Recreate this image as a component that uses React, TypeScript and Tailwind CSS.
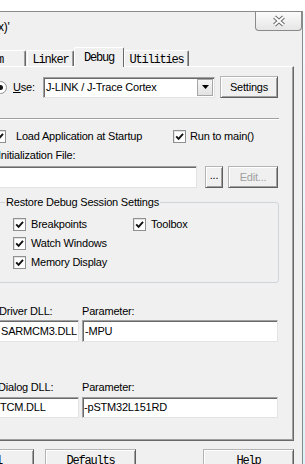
import React from 'react';

const sunken =
  'bg-white border border-t-[#a0a0a0] border-l-[#a0a0a0] border-r-[#e3e3e3] border-b-[#e3e3e3] shadow-[inset_1px_1px_0_#696969]';
const raised =
  'border border-t-[#b4b4b4] border-l-[#b4b4b4] border-r-[#5f5f5f] border-b-[#5f5f5f] shadow-[inset_1px_1px_0_#ffffff,inset_-1px_-1px_0_#a0a0a0] bg-[#f0f0f0]';

const CheckBox: React.FC<{ className?: string }> = ({ className = '' }) => (
  <span
    className={`w-[13px] h-[13px] shrink-0 flex items-center justify-center border border-[#8e8f8f] bg-white shadow-[inset_1px_1px_0_#e2e2e2] ${className}`}
  >
    <svg width="9" height="9" viewBox="0 0 9 9">
      <path d="M1.2 4.3 L3.6 6.8 L8 1.8" fill="none" stroke="#111" strokeWidth="1.9" />
    </svg>
  </span>
);

const Radio: React.FC<{ className?: string }> = ({ className = '' }) => (
  <span
    className={`w-[13px] h-[13px] shrink-0 rounded-full flex items-center justify-center border border-[#8e8f8f] bg-white ${className}`}
  >
    <span className="w-[5px] h-[5px] rounded-full bg-[#151515]" />
  </span>
);

const Field: React.FC<{ className?: string; children?: React.ReactNode }> = ({ className = '', children }) => (
  <div className={`flex items-center whitespace-nowrap overflow-hidden ${sunken} ${className}`}>{children}</div>
);

const Btn: React.FC<{ className?: string; children?: React.ReactNode }> = ({ className = '', children }) => (
  <div className={`flex items-center justify-center whitespace-nowrap ${raised} ${className}`}>{children}</div>
);

const Tab: React.FC<{ className?: string; children?: React.ReactNode }> = ({ className = '', children }) => (
  <div
    className={`flex items-center justify-center whitespace-nowrap bg-[#f0f0f0] border-t border-l border-t-[#ffffff] border-l-[#ffffff] border-r border-r-[#696969] shadow-[inset_-1px_0_0_#a0a0a0] rounded-t-[2px] ${className}`}
  >
    {children}
  </div>
);

export default function App() {
  return (
    <div className="w-[305px] h-[464px] overflow-hidden bg-white flex flex-col font-['Liberation_Sans',Arial,sans-serif] text-[11px] leading-[13px] tracking-[-0.2px] text-black">
      <div className="h-[11px] shrink-0" />
      <div className="flex flex-1 min-h-0">
        {/* Dialog window */}
        <div className="w-[303px] shrink-0 flex flex-col bg-[#f0f0f0] border-t border-r border-[#8a8a8a]">
          {/* Title bar */}
          <div className="h-[35px] shrink-0 flex items-start">
            <span className="-ml-[2px] mt-[8px] text-[12px] leading-[14px]">x)'</span>
            <div className="ml-auto w-[47px] h-[19px] flex items-center justify-center border-x border-b border-[#8a8a8a] rounded-b-[4px] bg-linear-to-b from-[#fbfbfb] to-[#e6e6e6]">
              <svg width="14" height="12" viewBox="0 0 14 12">
                <path d="M2.5 2 L11.5 10 M11.5 2 L2.5 10" stroke="#6a6a6a" strokeWidth="4" />
                <path d="M2.5 2 L11.5 10 M11.5 2 L2.5 10" stroke="#ffffff" strokeWidth="2" />
              </svg>
            </div>
          </div>

          {/* Tabs */}
          <div className="h-[19px] shrink-0 flex items-end font-['Liberation_Mono',monospace] text-[12px] leading-[14px] tracking-[-1.2px]">
            <Tab className="-ml-[38px] w-[64px] h-[16px] pt-[2px]">Asm</Tab>
            <Tab className="ml-[1px] w-[47px] h-[16px] pt-[2px]">Linker</Tab>
            <Tab className="w-[50px] h-[20px] -mb-px relative z-10 shadow-none">Debug</Tab>
            <Tab className="w-[65px] h-[16px] pt-[2px]">Utilities</Tab>
          </div>

          {/* Tab panel */}
          <div className="w-[294px] h-[375px] shrink-0 flex flex-col border-t border-t-white border-r border-b border-r-[#696969] border-b-[#696969] shadow-[inset_-1px_-1px_0_#a0a0a0]">
            {/* Use row */}
            <div className="mt-[9px] h-[22px] flex items-center">
              <Radio className="-ml-[6px]" />
              <span className="ml-[6px] w-[30px]">
                <span className="underline">U</span>se:
              </span>
              <div className={`w-[172px] h-[21px] flex items-center ${sunken}`}>
                <span className="flex-1 pl-[2px] whitespace-nowrap">J-LINK / J-Trace Cortex</span>
                <div className="w-[16px] h-[17px] mr-[1px] flex items-center justify-center border border-[#a7a7a7] bg-linear-to-b from-[#f6f6f6] to-[#e2e2e2]">
                  <svg width="7" height="4" viewBox="0 0 7 4">
                    <path d="M0 0 H7 L3.5 4 Z" fill="#000" />
                  </svg>
                </div>
              </div>
              <Btn className="ml-[5px] w-[58px] h-[22px]">Settings</Btn>
            </div>

            <div className="mt-[20px] w-[279px] h-[2px] border-t border-t-[#a0a0a0] border-b border-b-white" />

            {/* Load / Run row */}
            <div className="mt-[10px] h-[13px] flex items-center">
              <div className="w-[173px] flex items-center">
                <CheckBox className="-ml-[7px]" />
                <span className="ml-[10px] whitespace-nowrap">Load Application at Startup</span>
              </div>
              <CheckBox />
              <span className="ml-[4px]">Run to main()</span>
            </div>

            <div className="mt-[6px] -ml-[2px]">Initialization File:</div>

            <div className="mt-[4px] h-[22px] flex">
              <Field className="-ml-[4px] w-[201px] h-[22px]" />
              <Btn className="ml-[8px] w-[18px] h-[22px] pb-[3px]">...</Btn>
              <Btn className="ml-[5px] w-[50px] h-[22px] text-[#a0a0a0]">Edit...</Btn>
            </div>

            {/* Restore group */}
            <fieldset className="mt-[8px] -ml-[4px] w-[283px] border border-[#cfd6da] rounded-[3px] pl-[16px] pt-[9px] pb-[13px]">
              <legend className="-ml-[8px] px-[1px] leading-[13px]">Restore Debug Session Settings</legend>
              <div className="flex flex-col gap-[6px]">
                <div className="h-[13px] flex items-center">
                  <div className="w-[120px] flex items-center">
                    <CheckBox />
                    <span className="ml-[5px]">Breakpoints</span>
                  </div>
                  <CheckBox />
                  <span className="ml-[5px]">Toolbox</span>
                </div>
                <div className="h-[13px] flex items-center">
                  <CheckBox />
                  <span className="ml-[5px]">Watch Windows</span>
                </div>
                <div className="h-[13px] flex items-center">
                  <CheckBox />
                  <span className="ml-[5px]">Memory Display</span>
                </div>
              </div>
            </fieldset>

            {/* Driver DLL */}
            <div className="mt-[22px] flex">
              <span className="-ml-[1px] w-[83px] whitespace-nowrap">Driver DLL:</span>
              <span>Parameter:</span>
            </div>
            <div className="mt-[2px] h-[22px] flex">
              <Field className="-ml-[4px] w-[83px] h-[22px] pl-[4px]">SARMCM3.DLL</Field>
              <Field className="ml-[3px] w-[196px] h-[22px] pl-[2px]">-MPU</Field>
            </div>

            {/* Dialog DLL */}
            <div className="mt-[39px] flex">
              <span className="-ml-[2px] w-[84px] whitespace-nowrap">Dialog DLL:</span>
              <span>Parameter:</span>
            </div>
            <div className="mt-[3px] h-[21px] flex">
              <Field className="-ml-[4px] w-[83px] h-[21px] pl-[3px]">TCM.DLL</Field>
              <Field className="ml-[3px] w-[196px] h-[21px] pl-[1px]">-pSTM32L151RD</Field>
            </div>
          </div>

          {/* Bottom buttons */}
          <div className="mt-[8px] flex font-['Liberation_Mono',monospace] text-[12px] leading-[14px] tracking-[-1.2px]">
            <Btn className="-ml-[57px] w-[91px] h-[23px] pr-[9px]">Cancel</Btn>
            <Btn className="ml-[11px] w-[91px] h-[23px]">Defaults</Btn>
            <Btn className="ml-[67px] w-[91px] h-[23px]">Help</Btn>
          </div>
        </div>
        <div className="flex-1 bg-linear-to-b from-[#f4fbfd] to-[#d8f3f9]" />
      </div>
    </div>
  );
}
